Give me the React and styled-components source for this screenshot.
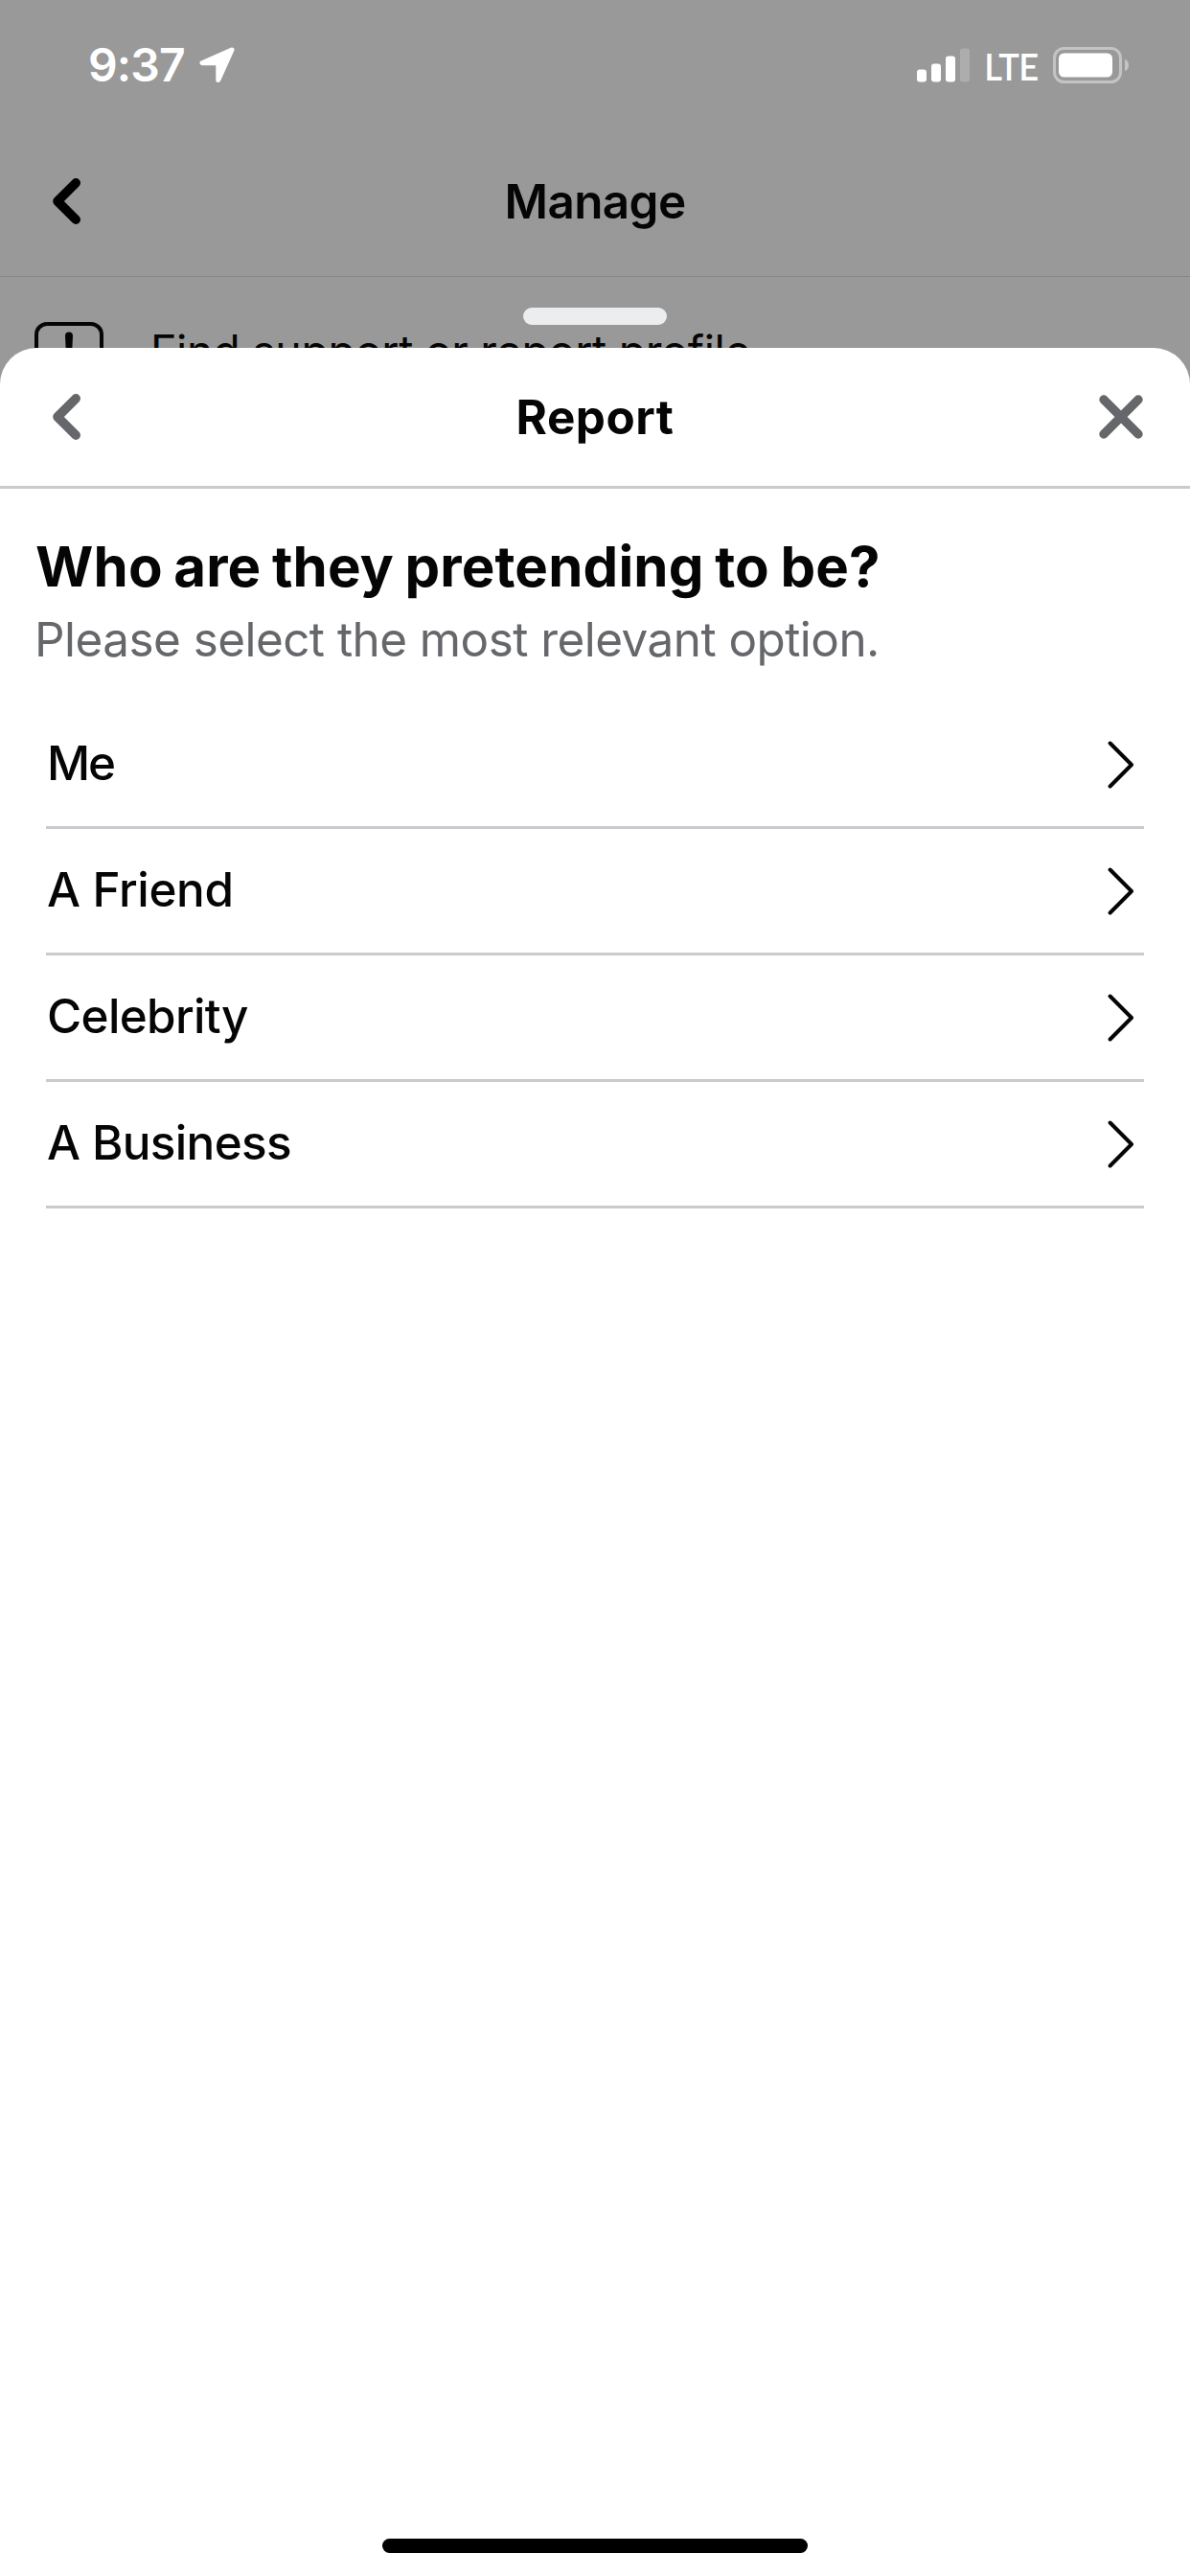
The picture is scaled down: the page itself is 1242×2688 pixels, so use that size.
import React from 'react';
import styled, { createGlobalStyle } from 'styled-components';

const options = [
  { label: 'Me', tracking: '-2px' },
  { label: 'A Friend', tracking: '-0.35px' },
  { label: 'Celebrity', tracking: '-0.65px' },
  { label: 'A Business', tracking: '-0.63px' }
];

const BackIcon = () => (
  <svg width="30" height="50" viewBox="0 0 30 50" fill="none">
    <path
      d="M25.2 5.8L6 25l19.2 19.2"
      stroke="currentColor"
      strokeWidth="9.6"
      strokeLinecap="round"
      strokeLinejoin="round"
    />
  </svg>
);

const CloseIcon = () => (
  <svg width="48" height="48" viewBox="0 0 48 48" fill="none">
    <path
      d="M6 6l36 36M42 6L6 42"
      stroke="currentColor"
      strokeWidth="9.4"
      strokeLinecap="round"
    />
  </svg>
);

const ChevronIcon = () => (
  <svg width="28" height="50" viewBox="0 0 28 50" fill="none">
    <path
      d="M3.6 2.5L26 25 3.6 47.5"
      stroke="currentColor"
      strokeWidth="4"
      strokeLinecap="round"
      strokeLinejoin="round"
    />
  </svg>
);

const LocationIcon = () => (
  <svg width="38" height="38" viewBox="0 0 38 38">
    <path
      d="M34 3L3 16.8h16.8V34.6z"
      fill="currentColor"
      stroke="currentColor"
      strokeWidth="5"
      strokeLinejoin="round"
    />
  </svg>
);

const SignalIcon = () => (
  <svg width="55" height="36" viewBox="0 0 55 36" fill="currentColor">
    <rect x="0" y="22.5" width="10" height="13" rx="3" />
    <rect x="15" y="16.5" width="10" height="19" rx="3" />
    <rect x="30" y="8.5" width="10" height="27" rx="3" />
    <rect x="45" y="0.5" width="10" height="35" rx="3" opacity="0.2" />
  </svg>
);

const BatteryIcon = () => (
  <svg width="80" height="38" viewBox="0 0 80 38" fill="none">
    <rect x="1.5" y="1.5" width="69" height="35" rx="10" stroke="#c4c4c4" strokeWidth="3" />
    <rect x="6" y="6.5" width="56" height="25" rx="5.5" fill="currentColor" />
    <path d="M75 12.8c2.6 1 4 3.4 4 6.2s-1.4 5.2-4 6.2z" fill="#c4c4c4" />
  </svg>
);

const FeedbackIcon = () => (
  <svg width="72" height="60" viewBox="0 0 72 60" fill="none">
    <rect x="2" y="2" width="68" height="56" rx="11" stroke="currentColor" strokeWidth="4" />
    <path d="M32 14.5a4 4 0 0 1 8 0l-1 20a3 3 0 0 1-6 0z" fill="currentColor" />
  </svg>
);

const App = () => {
  return (
    <Screen>
      <GlobalStyle />
      <StatusBar>
        <StatusGroup>
          <Time>9:37</Time>
          <LocationIcon />
        </StatusGroup>
        <StatusGroup>
          <SignalIcon />
          <Network>LTE</Network>
          <BatteryIcon />
        </StatusGroup>
      </StatusBar>

      <NavBar>
        <IconButton aria-label="Back">
          <BackIcon />
        </IconButton>
        <NavTitle>Manage</NavTitle>
      </NavBar>
      <SupportRow>
        <FeedbackIcon />
        <SupportText>Find support or report profile</SupportText>
      </SupportRow>

      <SheetLayer>
        <Grabber />
        <Sheet>
          <SheetHeader>
            <IconButton aria-label="Back">
              <BackIcon />
            </IconButton>
            <SheetTitle>Report</SheetTitle>
            <IconButton $end aria-label="Close">
              <CloseIcon />
            </IconButton>
          </SheetHeader>
          <Intro>
            <Question>Who are they pretending to be?</Question>
            <Hint>Please select the most relevant option.</Hint>
          </Intro>
          <OptionList>
            {options.map(({ label, tracking }) => (
              <Option key={label}>
                <OptionLabel $tracking={tracking}>{label}</OptionLabel>
                <ChevronIcon />
              </Option>
            ))}
          </OptionList>
          <HomeIndicator />
        </Sheet>
      </SheetLayer>
    </Screen>
  );
};

const GlobalStyle = createGlobalStyle`
  * {
    box-sizing: border-box;
  }

  body {
    margin: 0;
    font-family: Inter, "Liberation Sans", sans-serif;
    color: #050505;
  }

  svg {
    display: block;
    flex-shrink: 0;
  }
`;

const Screen = styled.div`
  position: relative;
  width: 1242px;
  height: 2688px;
  overflow: hidden;
  background: #999;
`;

const StatusBar = styled.div`
  display: flex;
  justify-content: space-between;
  align-items: center;
  height: 132px;
  padding: 4px 63px 0 92px;
  color: #fff;
`;

const StatusGroup = styled.div`
  display: flex;
  align-items: center;
`;

const Time = styled.span`
  width: 116px;
  font-size: 48px;
  font-weight: 600;
  line-height: 60px;
  letter-spacing: -0.85px;
`;

const Network = styled.span`
  width: 87px;
  padding-top: 2px;
  font-family: Lato, "Liberation Sans", sans-serif;
  font-size: 39px;
  font-weight: 600;
  line-height: 48px;
  letter-spacing: -0.5px;
  text-align: center;
  transform: scaleX(0.93);
`;

const Bar = styled.div`
  display: grid;
  grid-template-columns: 1fr auto 1fr;
  align-items: center;
`;

const NavBar = styled(Bar)`
  height: 157px;
  padding: 0 54px;
  border-bottom: 1px solid #868686;
`;

const IconButton = styled.button`
  display: flex;
  justify-self: ${({ $end }) => ($end ? 'end' : 'start')};
  padding: 0;
  border: none;
  background: none;
  color: #000;
`;

const SheetHeader = styled(Bar)`
  height: 147px;
  padding: 0 48px;
  border-bottom: 3px solid #cbcbcf;

  ${IconButton} {
    color: #65676b;
  }

  ${IconButton}:first-child {
    padding-left: 6px;
  }
`;

const NavTitle = styled.h1`
  margin: 0;
  font-size: 49.4px;
  font-weight: 600;
  line-height: 60px;
  letter-spacing: -0.58px;
`;

const SheetTitle = styled.h2`
  margin: 0;
  font-size: 49.4px;
  font-weight: 700;
  line-height: 60px;
  letter-spacing: 0.5px;
`;

const SupportRow = styled.div`
  display: flex;
  align-items: center;
  gap: 49px;
  padding: 47px 36px 0;
`;

const SupportText = styled.span`
  font-size: 46.4px;
  line-height: 60px;
  letter-spacing: -0.28px;
`;

/* Sits over the dimmed page */
const SheetLayer = styled.div`
  position: absolute;
  inset: 321px 0 0;
  display: flex;
  flex-direction: column;
  align-items: center;
  gap: 24px;
`;

const Grabber = styled.div`
  width: 150px;
  height: 18px;
  border-radius: 9px;
  background: #ebedef;
`;

const Sheet = styled.section`
  display: flex;
  flex-direction: column;
  flex: 1;
  width: 100%;
  border-radius: 38px 38px 0 0;
  background: #fff;
`;

const Intro = styled.div`
  padding: 45px 36px 0;
`;

const Question = styled.h3`
  margin: 0 0 4px 1px;
  font-size: 58.2px;
  font-weight: 700;
  line-height: 72px;
  letter-spacing: 0.15px;
  word-spacing: -2.4px;
`;

const Hint = styled.p`
  margin: 0;
  color: #65676b;
  font-size: 49.4px;
  line-height: 72px;
  letter-spacing: -0.52px;
`;

const OptionList = styled.ul`
  margin: 30px 48px 0;
  padding: 0;
  list-style: none;
`;

const Option = styled.li`
  display: flex;
  justify-content: space-between;
  align-items: center;
  height: 132px;
  padding: 1px 11px 0 1px;
  border-bottom: 3px solid #c9cbce;
`;

const OptionLabel = styled.span`
  padding-bottom: 4px;
  font-size: 49.4px;
  font-weight: 500;
  line-height: 60px;
  letter-spacing: ${({ $tracking }) => $tracking};
`;

const HomeIndicator = styled.div`
  align-self: center;
  width: 444px;
  height: 15px;
  margin: auto 0 24px;
  border-radius: 8px;
  background: #000;
`;

export default App;
